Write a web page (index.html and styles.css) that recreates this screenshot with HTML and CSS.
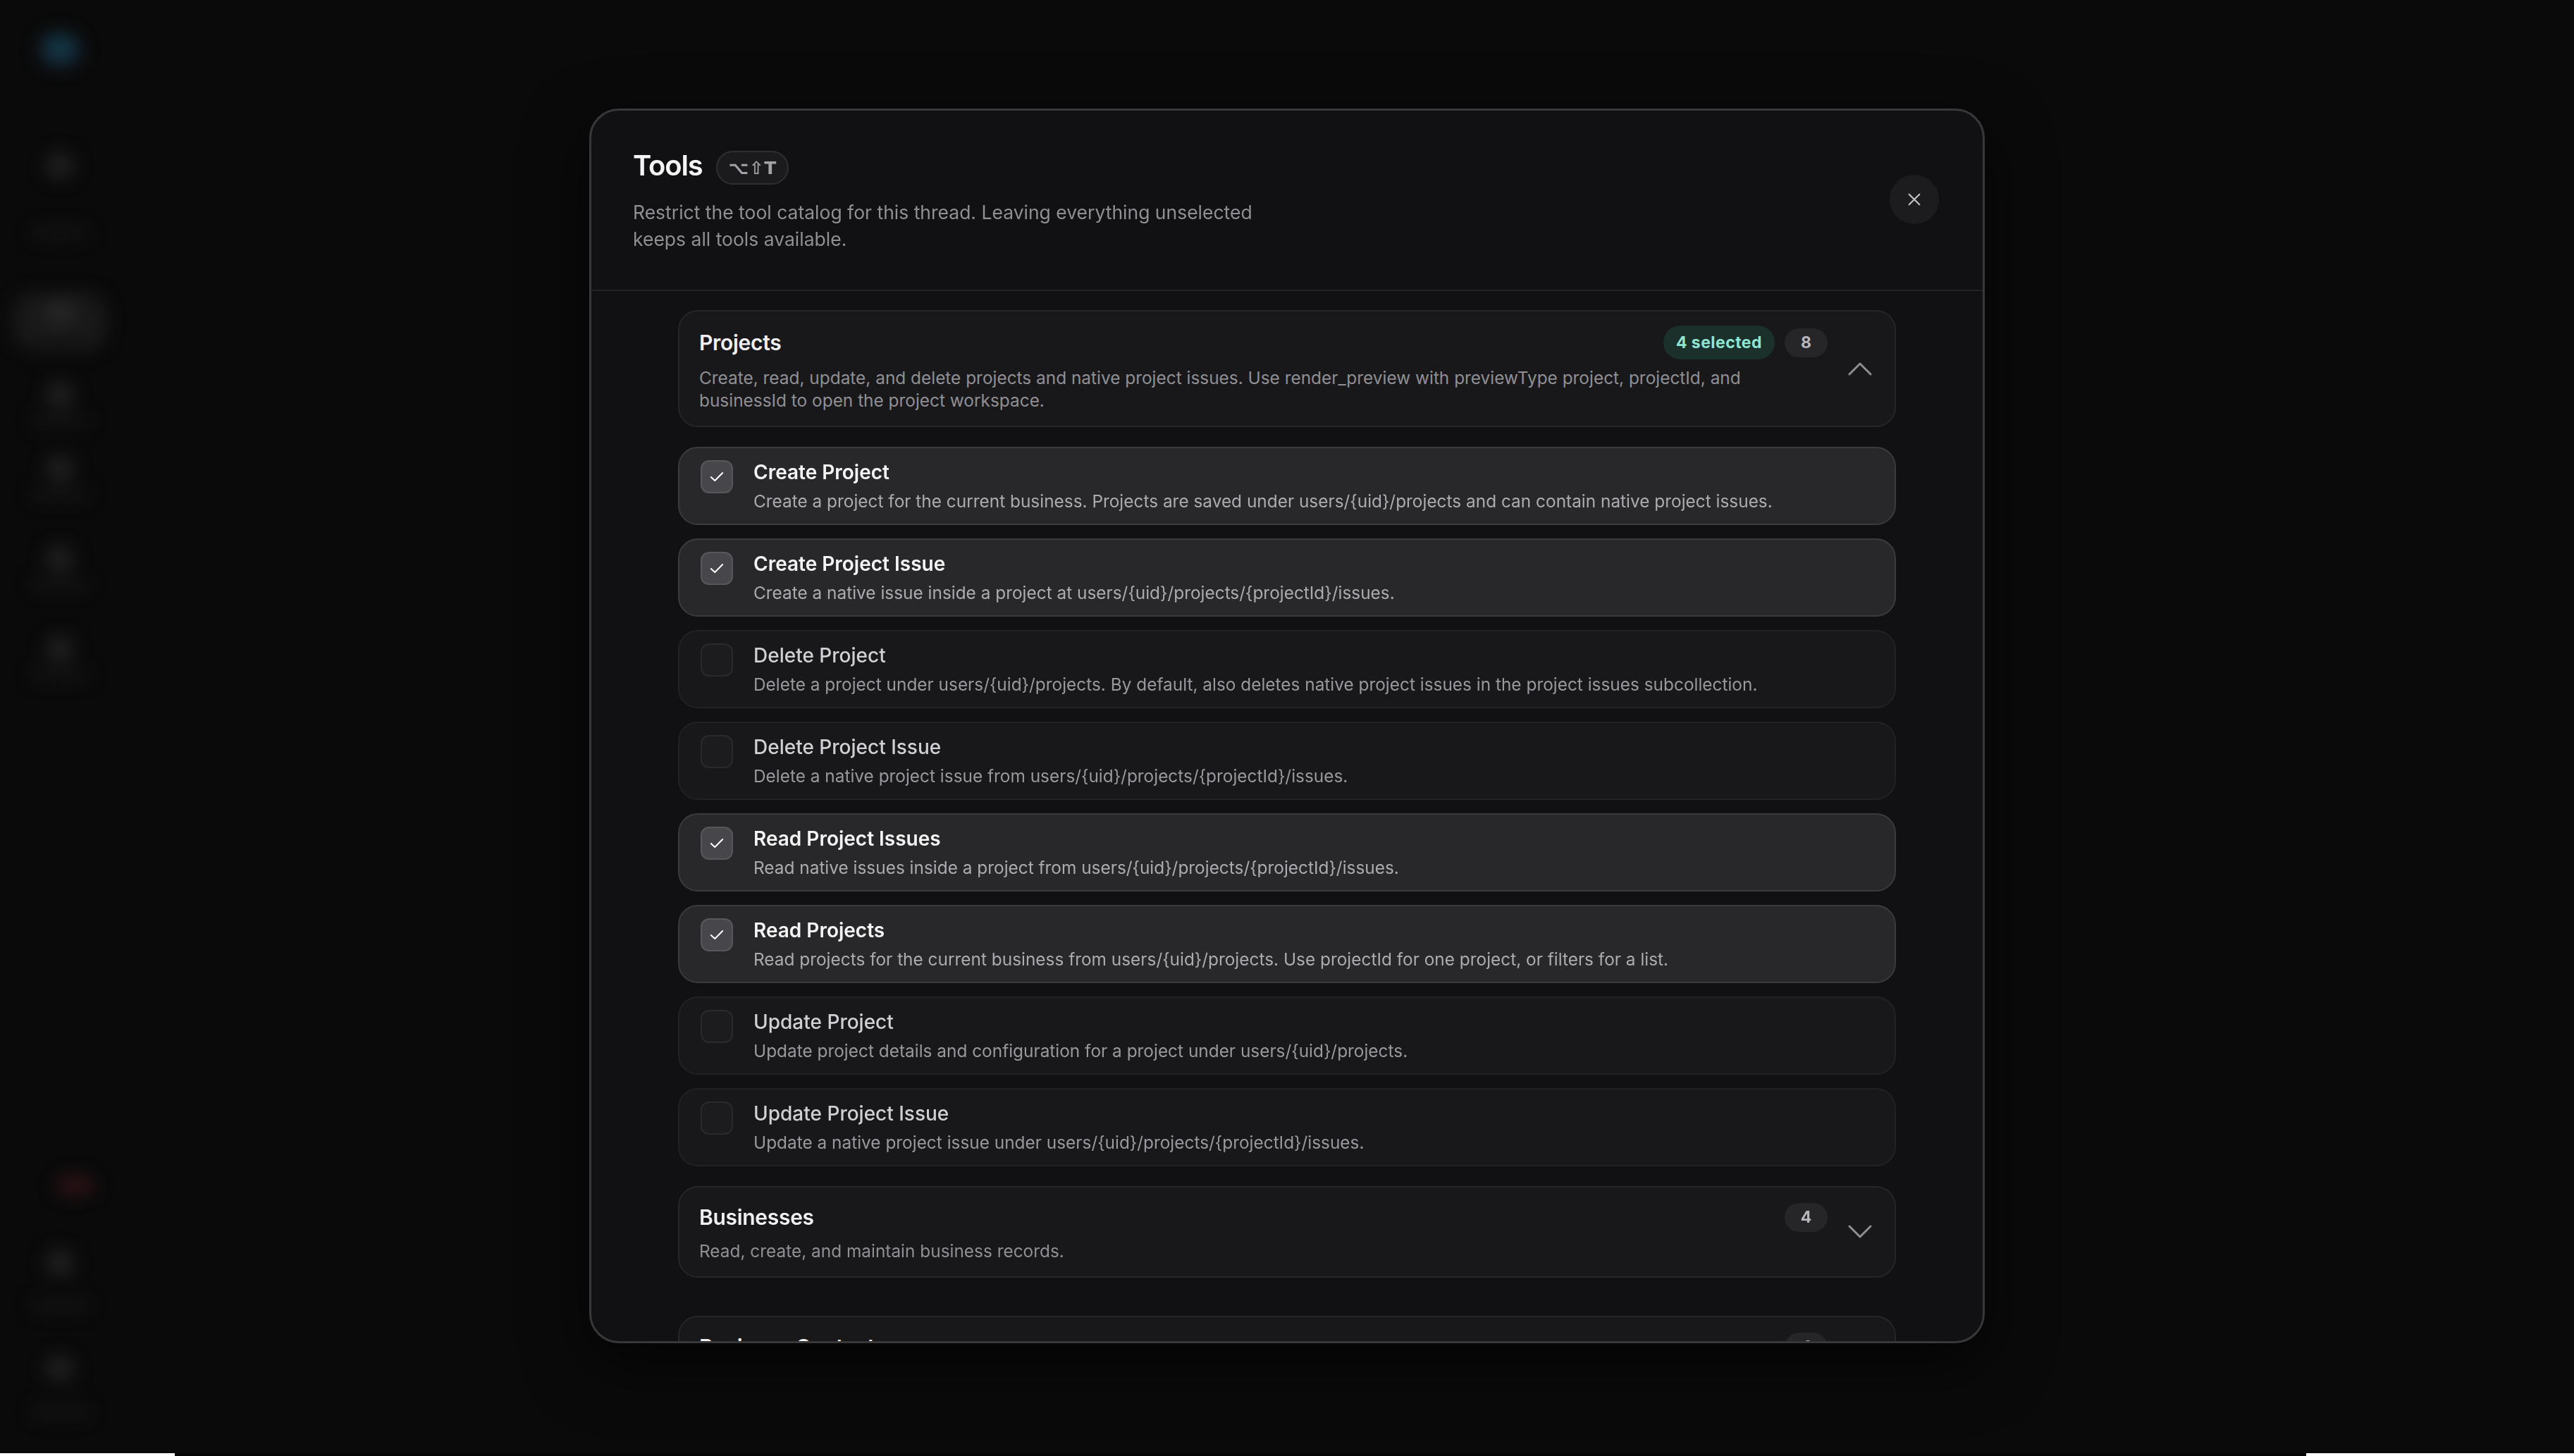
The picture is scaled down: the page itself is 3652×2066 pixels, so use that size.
FILE: index.html
```html
<!DOCTYPE html>
<html lang="en">
<head>
    <meta charset="UTF-8">
    <title>Tools</title>
    <link rel="stylesheet" href="styles.css">
</head>
<body>
    <div class="app">
        <aside class="sidebar">
            <span class="side-logo"></span>
            <div class="side-item first"><span class="side-icon"></span><span class="side-label"></span></div>
            <div class="side-item active"><span class="side-icon"></span><span class="side-label"></span></div>
            <div class="side-item gap-55"><span class="side-icon"></span><span class="side-label"></span></div>
            <div class="side-item gap-43"><span class="side-icon"></span><span class="side-label"></span></div>
            <div class="side-item gap-66"><span class="side-icon"></span><span class="side-label"></span></div>
            <div class="side-item gap-66"><span class="side-icon"></span><span class="side-label"></span></div>
            <span class="side-spacer"></span>
            <span class="side-alert"></span>
            <div class="side-item wide gap-77"><span class="side-icon"></span><span class="side-label"></span></div>
            <div class="side-item wide gap-64"><span class="side-icon"></span><span class="side-label"></span></div>
        </aside>
        <main class="app-main"></main>
    </div>
    <div class="bottom-strip">
        <span class="strip-light left"></span>
        <span class="strip-dark"></span>
        <span class="strip-light right"></span>
    </div>

    <div class="overlay">
        <div class="modal">
            <header class="modal-header">
                <div class="modal-heading">
                    <div class="title-row">
                        <h1>Tools</h1>
                        <kbd class="shortcut">⌥⇧T</kbd>
                    </div>
                    <p class="modal-desc">Restrict the tool catalog for this thread. Leaving everything unselected keeps all tools available.</p>
                </div>
                <button class="close-btn" type="button" aria-label="Close">
                    <svg viewBox="0 0 24 24" width="22" height="22"><path d="M4 4 L20 20 M20 4 L4 20"/></svg>
                </button>
            </header>

            <div class="modal-body">
                <section class="group">
                    <div class="group-head">
                        <div class="group-info">
                            <div class="group-title-row">
                                <h2>Projects</h2>
                                <div class="group-badges">
                                    <span class="badge selected">4 selected</span>
                                    <span class="badge count">8</span>
                                </div>
                            </div>
                            <p class="group-desc">Create, read, update, and delete projects and native project issues. Use render_preview with previewType project, projectId, and businessId to open the project workspace.</p>
                        </div>
                        <svg class="chevron" viewBox="0 0 34 20" width="34" height="20"><path d="M2 18 L17 3 L32 18"/></svg>
                    </div>

                    <ul class="tool-list">
                        <li class="tool checked">
                            <span class="checkbox"><svg viewBox="0 0 22 16" width="20" height="15"><path d="M2 8.5 L8 14 L20 2"/></svg></span>
                            <div class="tool-text">
                                <h3>Create Project</h3>
                                <p>Create a project for the current business. Projects are saved under users/{uid}/projects and can contain native project issues.</p>
                            </div>
                        </li>
                        <li class="tool checked">
                            <span class="checkbox"><svg viewBox="0 0 22 16" width="20" height="15"><path d="M2 8.5 L8 14 L20 2"/></svg></span>
                            <div class="tool-text">
                                <h3>Create Project Issue</h3>
                                <p>Create a native issue inside a project at users/{uid}/projects/{projectId}/issues.</p>
                            </div>
                        </li>
                        <li class="tool">
                            <span class="checkbox"></span>
                            <div class="tool-text">
                                <h3>Delete Project</h3>
                                <p>Delete a project under users/{uid}/projects. By default, also deletes native project issues in the project issues subcollection.</p>
                            </div>
                        </li>
                        <li class="tool">
                            <span class="checkbox"></span>
                            <div class="tool-text">
                                <h3>Delete Project Issue</h3>
                                <p>Delete a native project issue from users/{uid}/projects/{projectId}/issues.</p>
                            </div>
                        </li>
                        <li class="tool checked">
                            <span class="checkbox"><svg viewBox="0 0 22 16" width="20" height="15"><path d="M2 8.5 L8 14 L20 2"/></svg></span>
                            <div class="tool-text">
                                <h3>Read Project Issues</h3>
                                <p>Read native issues inside a project from users/{uid}/projects/{projectId}/issues.</p>
                            </div>
                        </li>
                        <li class="tool checked">
                            <span class="checkbox"><svg viewBox="0 0 22 16" width="20" height="15"><path d="M2 8.5 L8 14 L20 2"/></svg></span>
                            <div class="tool-text">
                                <h3>Read Projects</h3>
                                <p>Read projects for the current business from users/{uid}/projects. Use projectId for one project, or filters for a list.</p>
                            </div>
                        </li>
                        <li class="tool">
                            <span class="checkbox"></span>
                            <div class="tool-text">
                                <h3>Update Project</h3>
                                <p>Update project details and configuration for a project under users/{uid}/projects.</p>
                            </div>
                        </li>
                        <li class="tool">
                            <span class="checkbox"></span>
                            <div class="tool-text">
                                <h3>Update Project Issue</h3>
                                <p>Update a native project issue under users/{uid}/projects/{projectId}/issues.</p>
                            </div>
                        </li>
                    </ul>
                </section>

                <section class="group collapsed">
                    <div class="group-head">
                        <div class="group-info">
                            <div class="group-title-row">
                                <h2>Businesses</h2>
                                <div class="group-badges">
                                    <span class="badge count">4</span>
                                </div>
                            </div>
                            <p class="group-desc">Read, create, and maintain business records.</p>
                        </div>
                        <svg class="chevron" viewBox="0 0 34 20" width="34" height="20"><path d="M2 2 L17 17 L32 2"/></svg>
                    </div>
                </section>

                <section class="group collapsed">
                    <div class="group-head">
                        <div class="group-info">
                            <div class="group-title-row">
                                <h2>Business Contacts</h2>
                                <div class="group-badges">
                                    <span class="badge count">4</span>
                                </div>
                            </div>
                            <p class="group-desc">Read, create, and maintain contacts linked to a business.</p>
                        </div>
                        <svg class="chevron" viewBox="0 0 34 20" width="34" height="20"><path d="M2 2 L17 17 L32 2"/></svg>
                    </div>
                </section>
            </div>
        </div>
    </div>
</body>
</html>
```

FILE: styles.css
```css
/* Dark palette for the tools dialog */
:root {
    --bg-page: #0a0a0a;
    --bg-modal: #111113;
    --bg-card: #18181b;
    --bg-card-on: #28282b;
    --line: #232326;
    --line-card: #262629;
    --line-on: #3b3b3f;
    --text-strong: #f4f4f5;
    --text-soft: #d0d0d4;
    --text-muted: #8f8f94;
    --accent-mint: #8fe6d0;
}

* {
    margin: 0;
    padding: 0;
    box-sizing: border-box;
}

html, body {
    height: 100%;
}

body {
    font-family: "Inter", "DejaVu Sans", sans-serif;
    background-color: var(--bg-page);
    color: var(--text-strong);
    display: flex;
    flex-direction: column;
    overflow: hidden;
}

/* Blurred app behind the dialog */
.app {
    flex: 1;
    display: flex;
}

.sidebar {
    width: 170px;
    display: flex;
    flex-direction: column;
    align-items: center;
    padding: 46px 0 52px;
    filter: blur(12px);
}

.side-logo {
    width: 60px;
    height: 50px;
    border-radius: 50%;
    background: radial-gradient(circle at 50% 40%, #12414d 0%, #142a3a 55%, #1a1428 100%);
}

.side-item {
    display: flex;
    flex-direction: column;
    align-items: center;
    gap: 12px;
}

.side-icon {
    width: 38px;
    height: 36px;
    border-radius: 12px;
    background-color: #1f1f1f;
}

.side-label {
    width: 80px;
    height: 14px;
    border-radius: 7px;
    background-color: #161616;
}

.side-item.first {
    margin-top: 121px;
    gap: 70px;
}

.side-item.active {
    margin-top: 78px;
    padding: 10px 26px;
    border-radius: 30px;
    background-color: #191919;
}

.side-item.active .side-icon {
    background-color: #262626;
}

.gap-55 { margin-top: 45px; }
.gap-43 { margin-top: 43px; }
.gap-66 { margin-top: 66px; }
.gap-77 { margin-top: 77px; }
.gap-64 { margin-top: 64px; }

.side-item.wide {
    gap: 36px;
}

.side-spacer {
    flex: 1;
}

.side-alert {
    width: 58px;
    height: 30px;
    margin-left: 44px;
    border-radius: 50%;
    background-color: #2c1216;
}

.app-main {
    flex: 1;
}

.bottom-strip {
    height: 4px;
    display: flex;
}

.strip-light {
    background-color: #ffffff;
}

.strip-light.left {
    width: 248px;
}

.strip-light.right {
    width: 380px;
}

.strip-dark {
    flex: 1;
    background-color: #050505;
}

/* Dialog */
.overlay {
    position: fixed;
    top: 0;
    left: 0;
    right: 0;
    bottom: 6px;
    display: flex;
    align-items: center;
    justify-content: center;
}

.modal {
    width: 1980px;
    height: 1752px;
    background-color: var(--bg-modal);
    border: 3px solid #38383b;
    border-radius: 42px;
    display: flex;
    flex-direction: column;
    overflow: hidden;
    box-shadow: 0 30px 90px rgba(0, 0, 0, 0.6);
}

.modal-header {
    display: flex;
    align-items: center;
    justify-content: space-between;
    padding: 51px 62px 53px 59px;
    border-bottom: 2px solid var(--line);
}

.title-row {
    display: flex;
    align-items: center;
    gap: 20px;
}

h1 {
    font-size: 40px;
    font-weight: 600;
    line-height: 48px;
    letter-spacing: -0.03em;
}

.shortcut {
    display: inline-flex;
    align-items: center;
    height: 48px;
    margin-top: 6px;
    padding: 0 15px;
    border: 2px solid #2f2f33;
    border-radius: 24px;
    background-color: #1b1b1e;
    color: #a2a2a7;
    font-family: "DejaVu Sans", sans-serif;
    font-size: 25px;
    font-weight: 700;
    letter-spacing: 0.02em;
}

.modal-desc {
    margin-top: 20px;
    max-width: 940px;
    font-size: 26.5px;
    line-height: 38px;
    color: var(--text-muted);
}

.close-btn {
    width: 70px;
    height: 70px;
    border: none;
    border-radius: 50%;
    background-color: #1c1c1f;
    display: flex;
    align-items: center;
    justify-content: center;
}

.close-btn svg path {
    fill: none;
    stroke: #c2c2c6;
    stroke-width: 2.4;
    stroke-linecap: round;
}

.modal-body {
    flex: 1;
    overflow: hidden;
    padding: 27px 123px 0;
    display: flex;
    flex-direction: column;
    gap: 28px;
}

/* Tool groups */
.group-head {
    display: flex;
    align-items: center;
    gap: 29px;
    padding: 20px 32px 20px 28px;
    border: 2px solid var(--line-card);
    border-radius: 28px;
    background-color: var(--bg-card);
}

.group.collapsed {
    margin-bottom: 26px;
}

.group-info {
    flex: 1;
}

.group-title-row {
    display: flex;
    align-items: center;
    justify-content: space-between;
    min-height: 44px;
}

h2 {
    font-size: 30px;
    font-weight: 600;
    line-height: 38px;
    letter-spacing: -0.01em;
    color: #f0f0f2;
}

.group-badges {
    display: flex;
    align-items: center;
    gap: 14px;
}

.badge {
    display: inline-flex;
    align-items: center;
    justify-content: center;
    font-size: 23px;
    font-weight: 700;
}

.badge.selected {
    height: 48px;
    padding: 0 18px;
    border-radius: 24px;
    background-color: #1b2f2b;
    color: var(--accent-mint);
    letter-spacing: 0.02em;
}

.badge.count {
    height: 41px;
    min-width: 61px;
    border-radius: 21px;
    background-color: #262629;
    color: #b8b8bc;
}

.group-desc {
    margin-top: 10px;
    max-width: 1520px;
    font-size: 24.4px;
    line-height: 32px;
    color: var(--text-muted);
}

.chevron {
    flex-shrink: 0;
}

.chevron path {
    fill: none;
    stroke: #8e8e92;
    stroke-width: 3;
    stroke-linecap: round;
    stroke-linejoin: round;
}

/* Tool rows */
.tool-list {
    list-style: none;
    margin-top: 28px;
    display: flex;
    flex-direction: column;
    gap: 19px;
}

.tool {
    display: flex;
    align-items: flex-start;
    gap: 29px;
    padding: 16px 30px;
    border: 2px solid #222225;
    border-radius: 28px;
    background-color: var(--bg-card);
}

.tool.checked {
    border-color: var(--line-on);
    background-color: var(--bg-card-on);
}

.checkbox {
    width: 46px;
    height: 47px;
    margin-top: 1px;
    flex-shrink: 0;
    border: 2px solid #2a2a2d;
    border-radius: 12px;
    background-color: #1c1c1f;
    display: flex;
    align-items: center;
    justify-content: center;
}

.tool.checked .checkbox {
    border-color: #58585c;
    background-color: #47474b;
}

.checkbox svg path {
    fill: none;
    stroke: #ffffff;
    stroke-width: 2.2;
    stroke-linecap: round;
    stroke-linejoin: round;
}

.tool-text h3 {
    font-size: 28px;
    font-weight: 500;
    line-height: 36px;
    color: var(--text-soft);
}

.tool.checked .tool-text h3 {
    font-weight: 600;
    color: var(--text-strong);
}

.tool-text p {
    margin-top: 7px;
    font-size: 24.4px;
    line-height: 32px;
    color: #98989d;
}

.tool.checked .tool-text p {
    color: #ababb0;
}
```
